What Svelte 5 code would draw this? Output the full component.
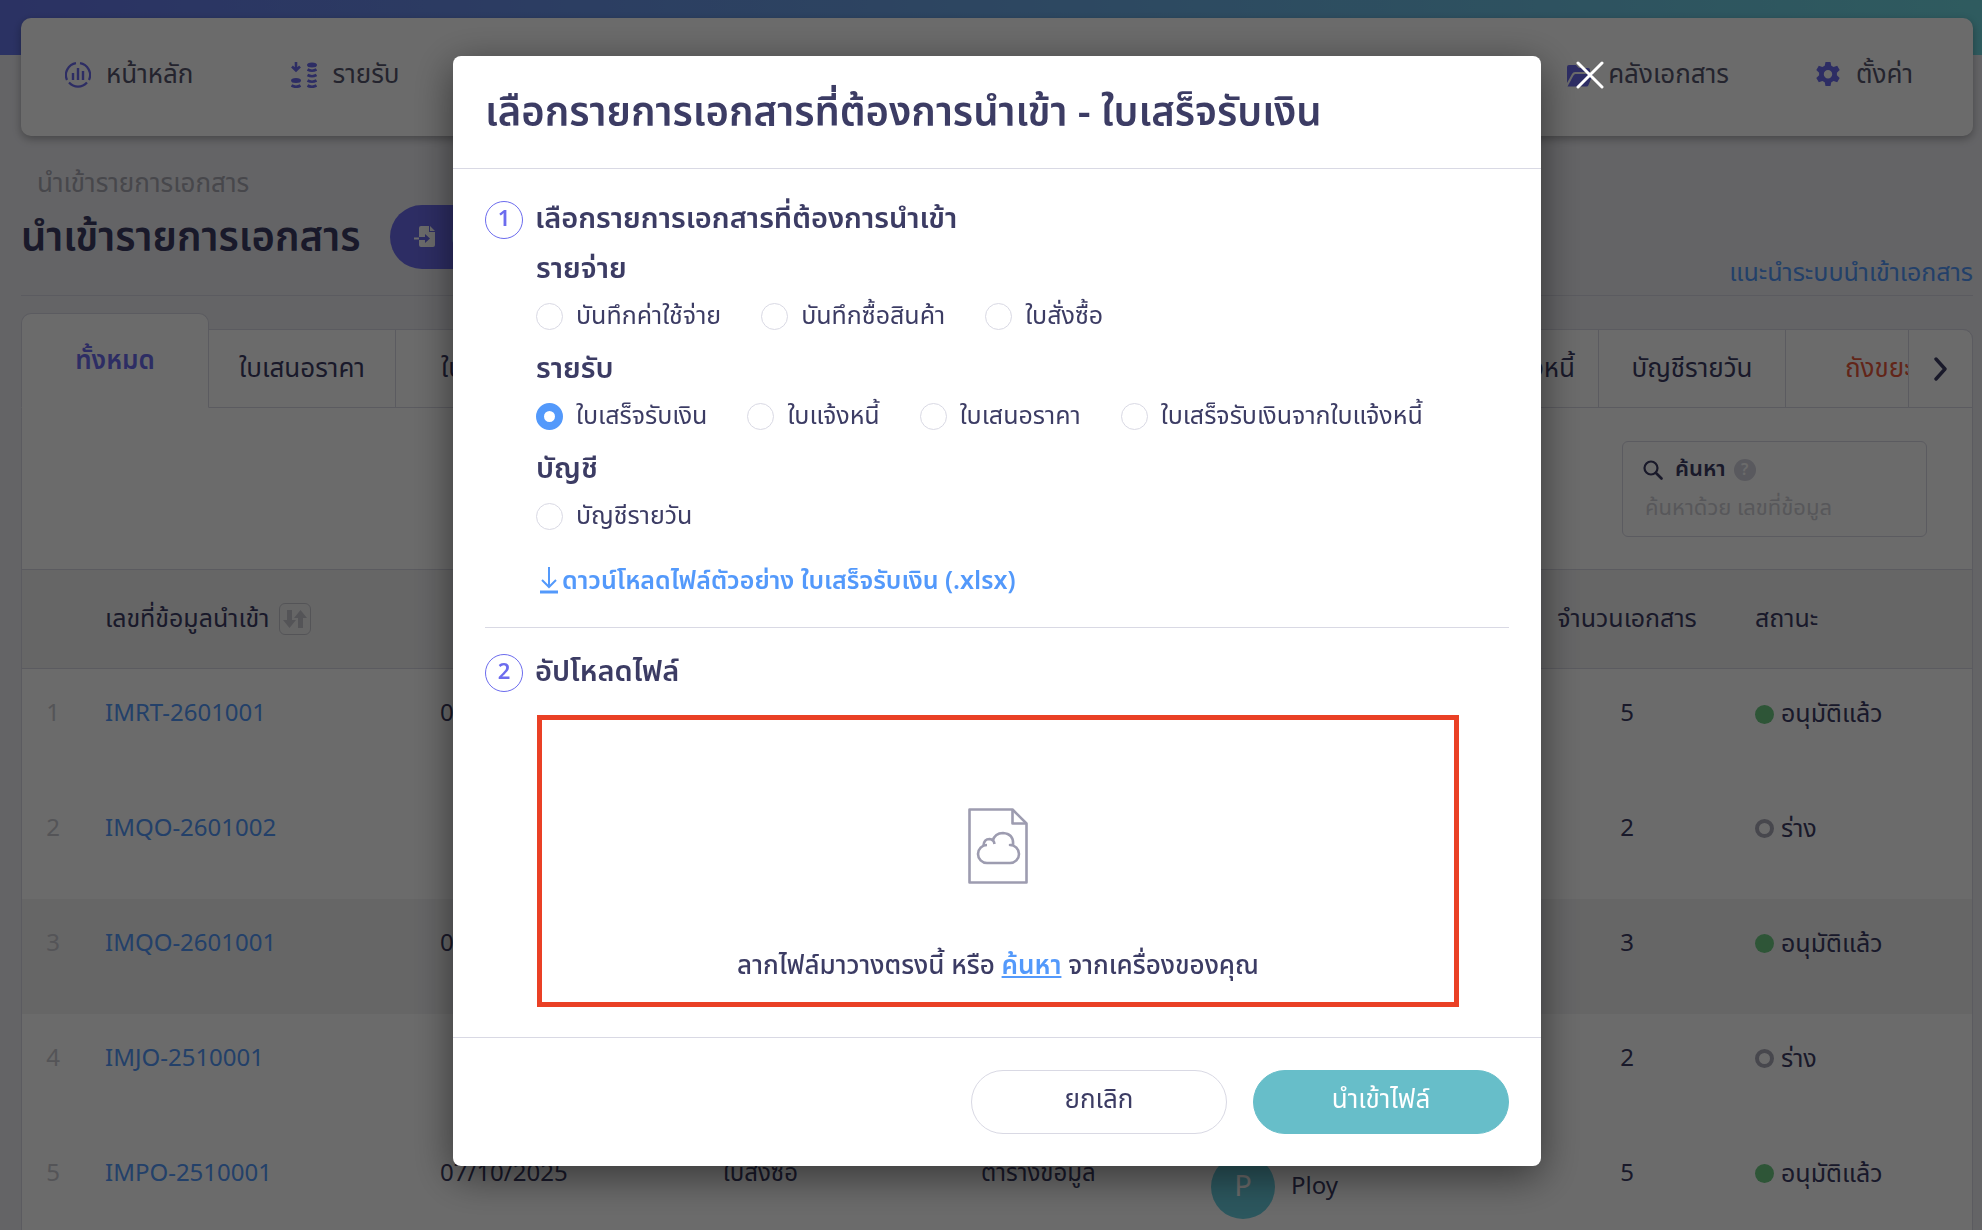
<script lang="ts">
  type Row = {
    id: string;
    date: string;
    type: string;
    source: string;
    user: string;
    count: number;
    approved: boolean;
  };

  const navLeft = [
    { icon: 'chart', label: 'หน้าหลัก' },
    { icon: 'income', label: 'รายรับ' }
  ];
  const navRight = [
    { icon: 'folder', label: 'คลังเอกสาร' },
    { icon: 'gear', label: 'ตั้งค่า' }
  ];

  const tabs = [
    'ทั้งหมด',
    'ใบเสนอราคา',
    'ใบแจ้งหนี้',
    'ใบเสร็จรับเงิน',
    'ใบสั่งซื้อ',
    'ใบเสร็จรับเงินจากใบแจ้งหนี้',
    'บัญชีรายวัน',
    'ถังขยะ'
  ];

  const rows: Row[] = [
    { id: 'IMRT-2601001', date: '07/01/2026', type: '', source: '', user: '', count: 5, approved: true },
    { id: 'IMQO-2601002', date: '', type: '', source: '', user: '', count: 2, approved: false },
    { id: 'IMQO-2601001', date: '07/01/2026', type: '', source: '', user: '', count: 3, approved: true },
    { id: 'IMJO-2510001', date: '', type: '', source: '', user: '', count: 2, approved: false },
    { id: 'IMPO-2510001', date: '07/10/2025', type: 'ใบสั่งซื้อ', source: 'ตารางข้อมูล', user: 'Ploy', count: 5, approved: true }
  ];

  const groups = [
    { title: 'รายจ่าย', options: ['บันทึกค่าใช้จ่าย', 'บันทึกซื้อสินค้า', 'ใบสั่งซื้อ'] },
    { title: 'รายรับ', options: ['ใบเสร็จรับเงิน', 'ใบแจ้งหนี้', 'ใบเสนอราคา', 'ใบเสร็จรับเงินจากใบแจ้งหนี้'] },
    { title: 'บัญชี', options: ['บัญชีรายวัน'] }
  ];

  let activeTab = $state('ทั้งหมด');
  let docType = $state('ใบเสร็จรับเงิน');
  let open = $state(true);
</script>

{#snippet navIcon(name: string)}
  <svg class="nav-icon" viewBox="0 0 26 26" aria-hidden="true">
    {#if name === 'chart'}
      <g fill="none" stroke="currentColor" stroke-width="2.2">
        <path d="M11 1.2A12 12 0 0 0 2 18" />
        <path d="M15 1.2A12 12 0 0 1 24 18" />
        <path d="M4 20.5A12 12 0 0 0 22 20.5" />
        <path d="M8 11v7M13 6v12M18 9v9" stroke-width="2.4" />
      </g>
    {:else if name === 'income'}
      <g fill="none" stroke="currentColor" stroke-width="2.6">
        <path d="M5 0v8M1 4.500l4 4 4-4" />
        <path d="M16.500 7.500q4.500 2.600 9 0M16.500 13q4.500 2.600 9 0M16.500 18.500q4.500 2.600 9 0M16.500 23.500q4.500 2.600 9 0M.5 23.500q4.500 2.600 9 0" />
      </g>
      <ellipse cx="21" cy="3" rx="5" ry="2.500" fill="currentColor" />
      <ellipse cx="5" cy="18.500" rx="5" ry="2.500" fill="currentColor" />
    {:else if name === 'folder'}
      <path fill="currentColor" d="M0 21V5q0-2 2-2h7l3 3h9q2 0 2 2v2H8q-2 0-3 2z" />
      <path fill="currentColor" d="M.5 24.500 6.500 13.500q.7-1.500 2-1.500H26l-4.500 11q-.6 1.500-2 1.500z" />
    {:else}
      <path
        fill="currentColor"
        fill-rule="evenodd"
        d="M10.500 0h5l.8 3.700 2.300 1.300 3.600-1.200 2.500 4.300-2.800 2.600v2.600l2.800 2.600-2.500 4.300-3.600-1.200-2.300 1.300-.8 3.700h-5l-.8-3.700L7.400 19l-3.600 1.200-2.500-4.300 2.800-2.600v-2.600L1.300 8.100l2.500-4.300L7.400 5l2.300-1.300zM13 8a4.200 4.200 0 1 0 0 8.400A4.200 4.200 0 0 0 13 8z"
      />
    {/if}
  </svg>
{/snippet}

{#snippet navLink(item: { icon: string; label: string })}
  <a class="nav-link" href="#{item.icon}">
    {@render navIcon(item.icon)}
    <span>{item.label}</span>
  </a>
{/snippet}

<div class="page">
  <div class="ribbon"></div>

  <nav class="navbar">
    <div class="nav-group">
      {#each navLeft as item}
        {@render navLink(item)}
      {/each}
    </div>
    <div class="nav-group right">
      {#each navRight as item}
        {@render navLink(item)}
      {/each}
    </div>
  </nav>

  <header class="page-head">
    <p class="breadcrumb">นำเข้ารายการเอกสาร</p>
    <div class="title-row">
      <h1>นำเข้ารายการเอกสาร</h1>
      <button class="import-button" type="button">
        <svg viewBox="0 0 22 22" aria-hidden="true">
          <path fill="currentColor" d="M7 0h8v6h6v13q0 2-2 2H7q-2 0-2-2v-5h6v3l5-4.500L11 8v3H5V2q0-2 2-2z" />
          <path fill="currentColor" d="M16 0l5 5h-5zM0 11.500h5v2H0z" />
        </svg>
        <span>นำเข้า</span>
      </button>
      <a class="guide" href="#guide">แนะนำระบบนำเข้าเอกสาร</a>
    </div>
  </header>

  <div class="tabs">
    {#each tabs as tab}
      <button
        type="button"
        class="tab"
        class:active={tab === activeTab}
        class:trash={tab === 'ถังขยะ'}
        class:wide={tab === 'ใบเสร็จรับเงินจากใบแจ้งหนี้'}
        onclick={() => (activeTab = tab)}
      >
        {tab}
      </button>
    {/each}
    <button class="tab-next" type="button" aria-label="ถัดไป">
      <svg viewBox="0 0 14 24" aria-hidden="true">
        <path d="M2 2l9 10-9 10" fill="none" stroke="currentColor" stroke-width="3.400" stroke-linecap="round" stroke-linejoin="round" />
      </svg>
    </button>
  </div>

  <main class="panel">
    <div class="toolbar">
      <div class="search">
        <label for="search">
          <svg viewBox="0 0 20 20" aria-hidden="true">
            <circle cx="8" cy="8" r="6.500" fill="none" stroke="currentColor" stroke-width="2.200" />
            <path d="M13 13l5.500 5.500" stroke="currentColor" stroke-width="2.600" stroke-linecap="round" />
          </svg>
          <span>ค้นหา</span>
          <span class="help">?</span>
        </label>
        <input id="search" type="text" placeholder="ค้นหาด้วย เลขที่ข้อมูล" />
      </div>
    </div>

    <table>
      <colgroup>
        <col class="c-no" />
        <col class="c-id" />
        <col class="c-date" />
        <col class="c-type" />
        <col class="c-source" />
        <col />
        <col class="c-count" />
        <col class="c-status" />
      </colgroup>
      <thead>
        <tr>
          <th></th>
          <th>
            <span class="sortable">
              เลขที่ข้อมูลนำเข้า
              <button class="sort" type="button" aria-label="เรียงลำดับ">
                <svg viewBox="0 0 24 20" aria-hidden="true">
                  <path fill="currentColor" d="M4 1h5v10h4l-6.500 8L0 11h4zM15 19h5V9h4l-6.500-8L11 9h4z" />
                </svg>
              </button>
            </span>
          </th>
          <th></th>
          <th></th>
          <th></th>
          <th></th>
          <th class="center">จำนวนเอกสาร</th>
          <th>สถานะ</th>
        </tr>
      </thead>
      <tbody>
        {#each rows as row, i}
          <tr class:shaded={i === 2}>
            <td class="number">{i + 1}</td>
            <td><a href="#{row.id}">{row.id}</a></td>
            <td>{row.date}</td>
            <td>{row.type}</td>
            <td>{row.source}</td>
            <td>
              {#if row.user}
                <div class="user">
                  <span class="avatar">{row.user[0]}</span>
                  <span>{row.user}</span>
                </div>
              {/if}
            </td>
            <td class="center">{row.count}</td>
            <td>
              <span class="status">
                <i class:approved={row.approved}></i>
                {row.approved ? 'อนุมัติแล้ว' : 'ร่าง'}
              </span>
            </td>
          </tr>
        {/each}
      </tbody>
    </table>
  </main>
</div>

{#if open}
  <div class="overlay">
    <div class="modal" role="dialog" aria-modal="true" aria-labelledby="modal-title">
      <button class="close" type="button" aria-label="ปิด" onclick={() => (open = false)}>
        <svg viewBox="0 0 28 28" aria-hidden="true">
          <path d="M2 2l24 24M26 2L2 26" fill="none" stroke="currentColor" stroke-width="3" stroke-linecap="round" />
        </svg>
      </button>

      <header class="modal-head">
        <h2 id="modal-title">เลือกรายการเอกสารที่ต้องการนำเข้า - {docType}</h2>
      </header>

      <div class="modal-body">
        <section class="step">
          <span class="step-number">1</span>
          <div class="step-content">
            <h3>เลือกรายการเอกสารที่ต้องการนำเข้า</h3>
            {#each groups as group}
              <fieldset>
                <legend>{group.title}</legend>
                <div class="options">
                  {#each group.options as option}
                    <label>
                      <input type="radio" name="doc-type" value={option} bind:group={docType} />
                      <span>{option}</span>
                    </label>
                  {/each}
                </div>
              </fieldset>
            {/each}
            <a class="download" href="#template">
              <svg viewBox="0 0 18 28" aria-hidden="true">
                <path d="M9 0v20M2 13l7 7 7-7" fill="none" stroke="currentColor" stroke-width="2" />
                <path d="M0 25h18" stroke="currentColor" stroke-width="3" />
              </svg>
              <span>ดาวน์โหลดไฟล์ตัวอย่าง {docType} (.xlsx)</span>
            </a>
          </div>
        </section>

        <section class="step upload">
          <span class="step-number">2</span>
          <div class="step-content">
            <h3>อัปโหลดไฟล์</h3>
            <div class="dropzone">
              <svg viewBox="0 0 60 76" aria-hidden="true">
                <g fill="none" stroke="currentColor" stroke-width="2.600" stroke-linejoin="round">
                  <path d="M1.500 1.500h43l14 14v59h-57z" />
                  <path d="M44.500 1.500v14h14" />
                  <path d="M19 37a9 9 0 0 0 0 18h23a9 9 0 0 0 0-18h3q1-11-10-12-8 0-10.500 8" />
                  <path d="M15.500 37.500q.5-6.500 6-6.500 4.500.5 5 5" />
                </g>
              </svg>
              <p>ลากไฟล์มาวางตรงนี้ หรือ <a href="#browse">ค้นหา</a> จากเครื่องของคุณ</p>
            </div>
          </div>
        </section>
      </div>

      <footer class="modal-foot">
        <button class="cancel" type="button" onclick={() => (open = false)}>ยกเลิก</button>
        <button class="submit" type="button">นำเข้าไฟล์</button>
      </footer>
    </div>
  </div>
{/if}

<style>
  :global(body) {
    margin: 0;
    background: #eeeef3;
  }

  .page,
  .overlay {
    --ink: #3c3c64;
    --line: #d9d9e4;
    --purple: #6c6cee;
    --blue: #5399fb;
    font-family: 'Noto Sans Thai', 'Noto Sans', sans-serif;
    font-size: 26px;
    line-height: 32px;
    color: var(--ink);
  }

  .page *,
  .overlay * {
    box-sizing: border-box;
  }

  .page {
    box-sizing: border-box;
    height: 100vh;
    overflow: hidden;
    padding: 0 9px 0 21px;
    background: #eeeef3;
  }

  button,
  input {
    font: inherit;
    color: inherit;
  }

  a {
    color: var(--blue);
    text-decoration: none;
  }

  .ribbon {
    height: 55px;
    margin: 0 -9px -37px -21px;
    background: linear-gradient(90deg, #6777ec, #70d9e2);
  }

  /* Navigation */
  .navbar {
    position: relative;
    display: flex;
    justify-content: space-between;
    height: 118px;
    padding: 41px 60px 0 44px;
    background: #fff;
    border-radius: 10px;
    box-shadow: 0 3px 8px rgba(0, 0, 0, 0.3);
  }

  .nav-group {
    display: flex;
    align-items: flex-start;
    gap: 98px;
  }

  .nav-group.right {
    gap: 86px;
  }

  .nav-link {
    display: flex;
    align-items: center;
    gap: 15px;
    color: #56566e;
  }

  .nav-icon {
    width: 26px;
    height: 26px;
    color: var(--purple);
  }

  /* Page heading */
  .page-head {
    padding-top: 32px;
    height: 160px;
    border-bottom: 1px solid var(--line);
  }

  .breadcrumb {
    margin: 0 16px 5px;
    color: #a9a9b4;
  }

  .title-row {
    display: flex;
    align-items: flex-start;
    height: 90px;
  }

  h1 {
    margin: 0 30px 0 0;
    font-size: 40px;
    line-height: 68px;
    font-weight: 600;
  }

  .import-button {
    display: flex;
    align-items: center;
    gap: 14px;
    height: 64px;
    padding: 0 32px 0 24px;
    border: 0;
    border-radius: 32px;
    background: var(--purple);
    color: #fff;
  }

  .import-button svg {
    width: 22px;
    height: 22px;
  }

  .guide {
    margin-left: auto;
    align-self: flex-end;
    padding-bottom: 6px;
    font-size: 25px;
  }

  /* Tabs */
  .tabs {
    position: relative;
    display: flex;
    align-items: flex-end;
    margin-top: 17px;
  }

  .tab {
    flex: 0 0 187px;
    height: 79px;
    padding: 0;
    border: 1px solid var(--line);
    border-left-width: 0;
    background: #fff;
    white-space: nowrap;
  }

  .tab.wide {
    flex: 1 0 0;
    text-align: right;
    padding-right: 23px;
  }

  .tab.active {
    flex-basis: 188px;
    height: 95px;
    border-left-width: 1px;
    border-bottom-color: #fff;
    border-radius: 10px 10px 0 0;
    color: var(--purple);
    font-weight: 600;
  }

  .tab.trash {
    color: #ea5a3d;
    border-radius: 0 10px 0 0;
  }

  .tab-next {
    position: absolute;
    right: 0;
    bottom: 0;
    display: grid;
    place-items: center;
    width: 65px;
    height: 79px;
    padding: 0;
    border: 1px solid var(--line);
    border-radius: 0 10px 0 0;
    background: #fff;
  }

  .tab-next svg {
    width: 14px;
    height: 24px;
  }

  /* Table panel */
  .panel {
    border: 1px solid var(--line);
    border-top: 0;
    background: #fff;
  }

  .toolbar {
    display: flex;
    justify-content: flex-end;
    padding: 33px 45px 32px;
  }

  .search {
    width: 305px;
    height: 96px;
    padding: 12px 20px;
    border: 1px solid var(--line);
    border-radius: 6px;
  }

  .search label {
    display: flex;
    align-items: center;
    gap: 12px;
    font-size: 22px;
    font-weight: 600;
  }

  .search svg {
    width: 20px;
    height: 20px;
  }

  .help {
    width: 22px;
    height: 22px;
    margin-left: -4px;
    border-radius: 50%;
    background: #d4d4df;
    color: #fff;
    font-size: 16px;
    line-height: 22px;
    text-align: center;
  }

  .search input {
    display: block;
    width: 100%;
    height: 36px;
    margin-top: 4px;
    padding: 0 2px;
    border: 0;
    outline: 0;
    background: none;
    font-size: 22px;
  }

  .search input::placeholder {
    color: #d0d0d6;
    opacity: 1;
  }

  table {
    width: 100%;
    table-layout: fixed;
    border-collapse: collapse;
  }

  .c-no { width: 62px; }
  .c-id { width: 335px; }
  .c-date { width: 283px; }
  .c-type { width: 258px; }
  .c-source { width: 230px; }
  .c-count { width: 214px; }
  .c-status { width: 238px; }

  th {
    height: 99px;
    padding: 0 21px;
    border: solid var(--line);
    border-width: 1px 0;
    background: #f3f3f4;
    font-size: 25px;
    font-weight: 400;
    text-align: left;
    white-space: nowrap;
  }

  td {
    height: 115px;
    padding: 29px 21px 0;
    font-size: 24px;
    vertical-align: top;
    white-space: nowrap;
  }

  .shaded td {
    background: #f3f3f4;
  }

  .center {
    text-align: center;
  }

  .number {
    padding-right: 0;
    padding-left: 0;
    text-align: center;
    color: #c9c9d0;
  }

  .sortable {
    display: flex;
    align-items: center;
    gap: 10px;
  }

  .sort {
    display: grid;
    place-items: center;
    width: 32px;
    height: 32px;
    padding: 0;
    border: 1px solid #c9c9d0;
    border-radius: 6px;
    background: none;
    color: #c9c9d0;
  }

  .sort svg {
    width: 24px;
    height: 20px;
  }

  .user {
    display: flex;
    align-items: center;
    gap: 16px;
    margin-top: -3px;
  }

  .avatar {
    width: 64px;
    height: 64px;
    border-radius: 50%;
    background: #69cfe0;
    color: #fff;
    font-size: 29px;
    line-height: 64px;
    text-align: center;
  }

  .status {
    display: flex;
    align-items: center;
    gap: 7px;
    font-size: 25px;
  }

  .status i {
    width: 19px;
    height: 19px;
    border: 4px solid #a9a9b8;
    border-radius: 50%;
  }

  .status i.approved {
    border: 0;
    background: #6ecb83;
  }

  /* Modal */
  .overlay {
    position: fixed;
    inset: 0;
    box-sizing: border-box;
    display: flex;
    justify-content: center;
    align-items: flex-start;
    padding: 56px 9px 0 21px;
    background: rgba(0, 0, 0, 0.58);
  }

  .modal {
    position: relative;
    width: 1088px;
    border-radius: 8px;
    background: #fff;
    box-shadow: 0 10px 40px rgba(0, 0, 0, 0.5);
  }

  .close {
    position: absolute;
    top: 5px;
    left: 100%;
    width: 28px;
    height: 28px;
    margin-left: 35px;
    padding: 0;
    border: 0;
    background: none;
    color: #fff;
  }

  .close svg {
    display: block;
  }

  .modal-head {
    padding: 30px 32px 26px;
    border-bottom: 1px solid var(--line);
  }

  h2 {
    margin: 0;
    font-size: 40px;
    line-height: 56px;
    font-weight: 600;
    white-space: nowrap;
  }

  .modal-body {
    padding: 0 32px 30px;
  }

  .step {
    display: flex;
    gap: 12px;
    padding: 28px 0 30px;
  }

  .step.upload {
    padding: 22px 0 0;
    border-top: 1px solid var(--line);
  }

  .step-number {
    flex: none;
    width: 38px;
    height: 38px;
    margin-top: 4px;
    border: 1px solid var(--purple);
    border-radius: 50%;
    color: var(--purple);
    font-size: 22px;
    font-weight: 600;
    line-height: 36px;
    text-align: center;
  }

  .step-content {
    flex: 1;
  }

  h3 {
    margin: 0;
    font-size: 29px;
    line-height: 44px;
    font-weight: 600;
  }

  fieldset {
    margin: 0;
    padding: 0;
    border: 0;
  }

  legend {
    padding: 6px 0 0 1px;
    font-size: 29px;
    line-height: 44px;
    font-weight: 600;
  }

  .options {
    display: flex;
    gap: 40px;
    height: 50px;
    padding-left: 1px;
    font-size: 25px;
  }

  .options label {
    display: flex;
    align-items: center;
    gap: 13px;
  }

  .options input {
    appearance: none;
    width: 27px;
    height: 27px;
    margin: 0;
    border: 1px solid var(--line);
    border-radius: 50%;
  }

  .options input:checked {
    border: 8px solid var(--blue);
  }

  .download {
    display: flex;
    align-items: center;
    gap: 4px;
    margin-top: 24px;
    padding-left: 5px;
    font-size: 25px;
    font-weight: 600;
  }

  .download svg {
    width: 18px;
    height: 28px;
  }

  .dropzone {
    display: flex;
    flex-direction: column;
    align-items: center;
    height: 292px;
    margin: 21px 50px 0 2px;
    padding-top: 88px;
    border: 5px solid #ea4025;
  }

  .dropzone svg {
    width: 60px;
    height: 76px;
    color: #9d9cb0;
  }

  .dropzone p {
    margin: 66px 0 0;
    font-weight: 500;
  }

  .dropzone a {
    text-decoration: underline;
    font-weight: 600;
  }

  .modal-foot {
    display: flex;
    justify-content: flex-end;
    gap: 26px;
    padding: 32px;
    border-top: 1px solid var(--line);
  }

  .modal-foot button {
    width: 256px;
    height: 64px;
    padding: 0 0 4px;
    border: 1px solid var(--line);
    border-radius: 32px;
    background: #fff;
  }

  .modal-foot .submit {
    border-color: #67bec9;
    background: #67bec9;
    color: #fff;
  }
</style>
